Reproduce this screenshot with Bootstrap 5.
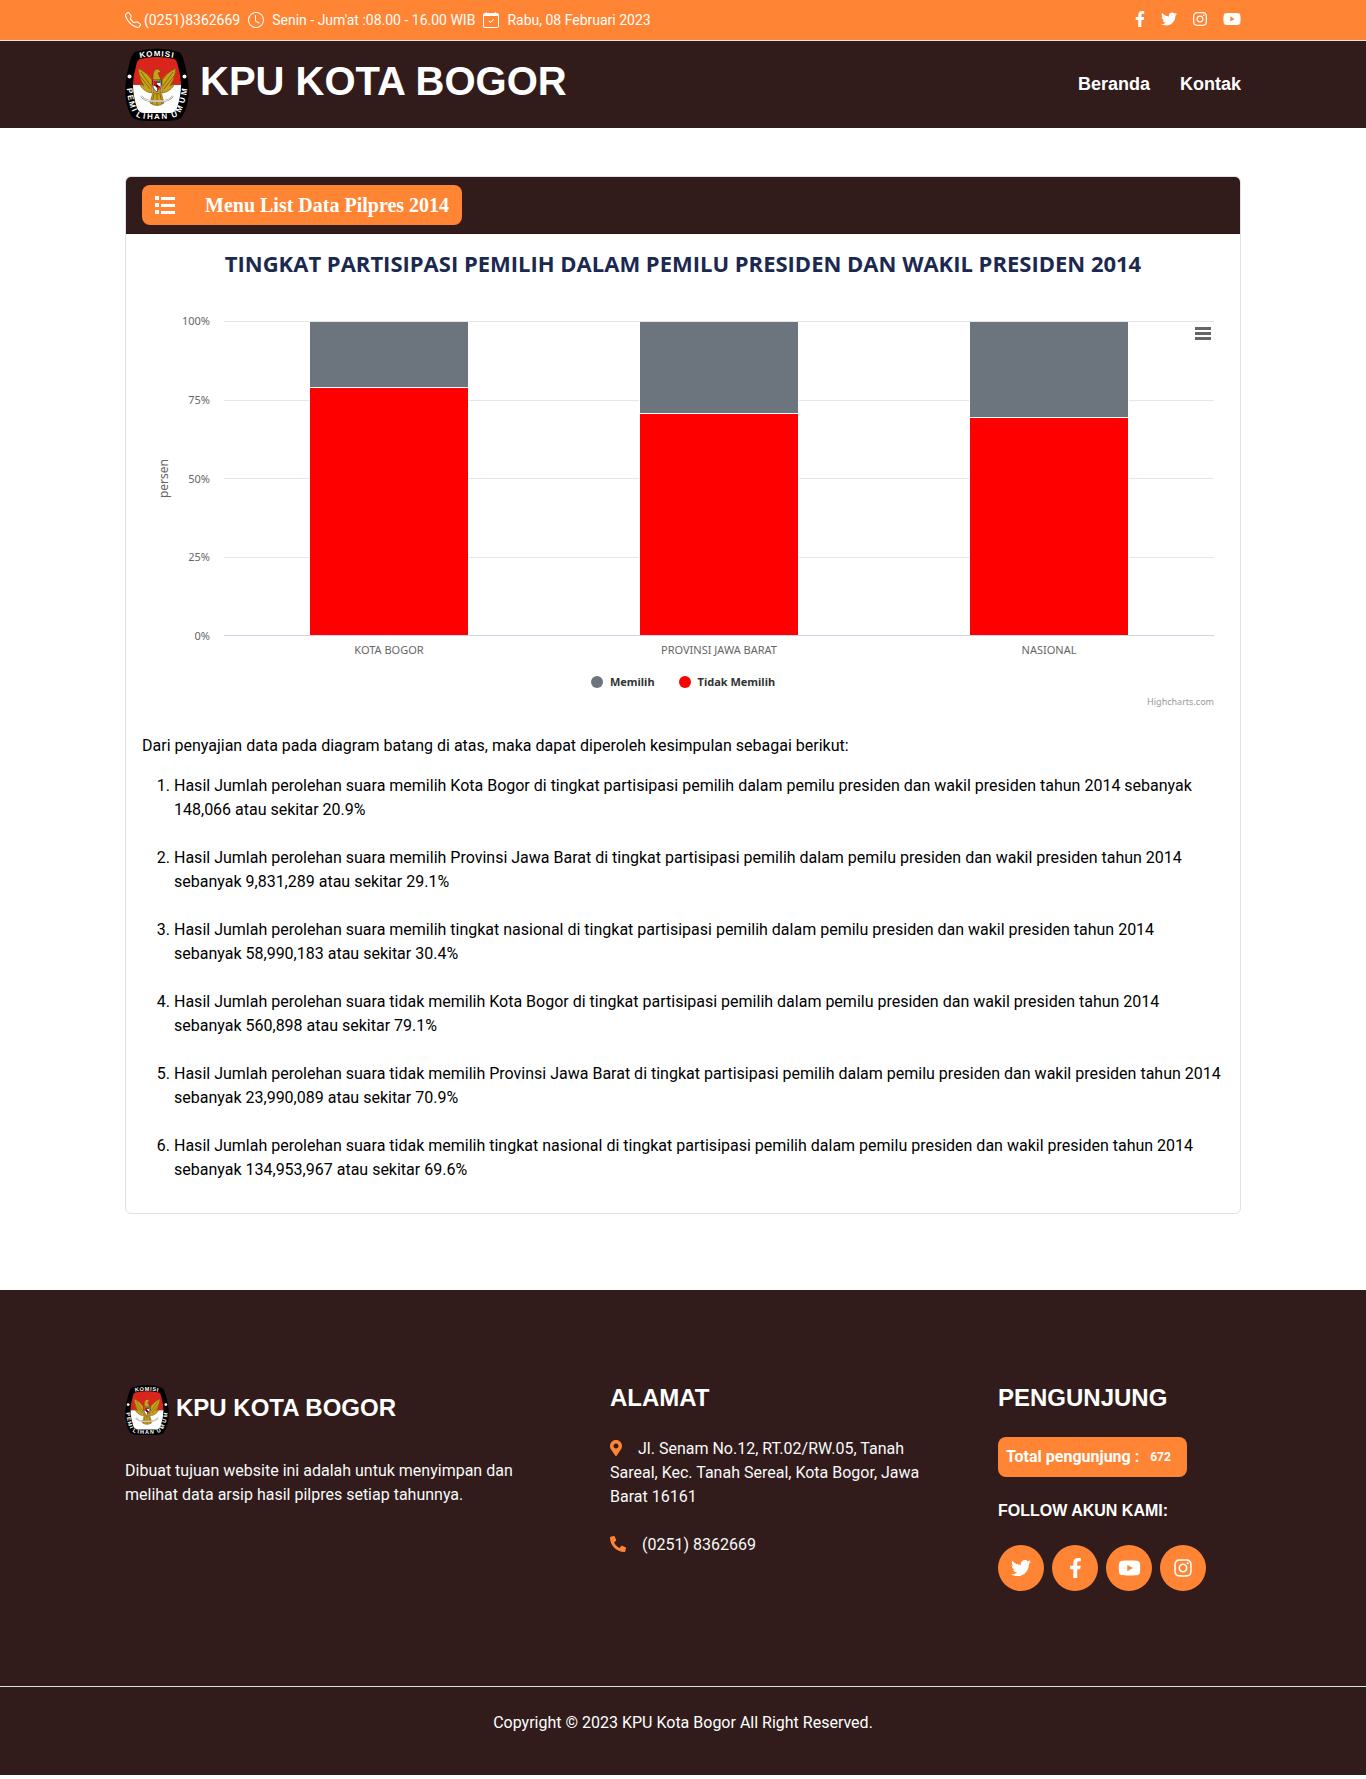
<!DOCTYPE html>
<html lang="id">
<head>
<meta charset="utf-8">
<meta name="viewport" content="width=device-width, initial-scale=1">
<title>KPU Kota Bogor</title>
<link href="https://cdn.jsdelivr.net/npm/bootstrap@5.3.0/dist/css/bootstrap.min.css" rel="stylesheet">
<style>
:root { --kpu-dark: #311c1b; --kpu-orange: #ff8534; }
body { font-family: Roboto, "Noto Sans", sans-serif; color: #000; background: #fff; }
a { text-decoration: none; }
.bg-kpu-dark { background: var(--kpu-dark); }
.bg-kpu-orange { background: var(--kpu-orange); }
.text-kpu-orange { color: var(--kpu-orange); }
.font-head { font-family: "Liberation Sans", Arial, sans-serif; font-weight: 700; }
svg { display: block; fill: currentColor; flex: none; }
.seal-text { fill: #fff; font: 700 8px "Liberation Sans", Arial, sans-serif; }
.topbar { height: 41px; font-size: 14px; border-bottom: 1px solid #dee2e6; }
.topbar .info { gap: 8px; }
.topbar .phone { gap: 3px; }
.topbar .social { padding-bottom: 2px; }
.masthead { height: 87px; }
.site-brand { gap: 11px; }
.site-name { font-size: 40px; line-height: 48px; margin: 0 0 8px; }
.main-nav { font-size: 18px; gap: 30px; }
.main-nav a { color: #fff; }
.data-card { margin-top: 48px; margin-bottom: 76px; border-color: #dee2e6; border-radius: 6px; }
.data-card .card-header { border-radius: 5px 5px 0 0; border-bottom: 1px solid #291413; padding: 8px 16px; }
.btn-menu { height: 40px; padding: 0 13px 0 12px; border: 0; border-radius: 8px; color: #fff; background: var(--kpu-orange); gap: 29px; font: 700 20px/24px "Liberation Serif", "Times New Roman", serif; }
.chart-title { font: 700 22px/26px "Open Sans", "Noto Sans", sans-serif; color: #1b2850; margin: 0; }
.chart { display: grid; grid-template-columns: 52px 20px 1fr; grid-template-rows: 315px auto; margin: 45px 10px 0; font: 11px/16px "Noto Sans", sans-serif; color: #666; }
.axis-title { grid-column: 1; grid-row: 1; font-size: 12px; writing-mode: vertical-rl; transform: rotate(180deg); justify-self: start; align-self: center; margin-left: 4px; }
.axis-ticks { grid-column: 1 / 3; grid-row: 1; margin: -8px 14px -8px 0; text-align: right; }
.gridlines, .bars { grid-column: 3; grid-row: 1; }
.gridlines div { flex: 1; border-top: 1px solid #e6e6e6; }
.gridlines { border-bottom: 1px solid #ccd6eb; }
.bars { padding: 1px 0; }
.bars > div { flex: 1; display: flex; justify-content: center; }
.stack { width: 48%; display: flex; flex-direction: column; box-shadow: 1px 0 #fff, -1px 0 #fff; }
.stack-a { background: #6c757d; border-bottom: 1px solid #fff; }
.stack-b { background: #f00; flex: 1; }
.dot-b { background: #f00; }
.cats { grid-column: 3; grid-row: 2; padding-top: 6px; }
.cats span { flex: 1; text-align: center; }
.chart-menu { grid-column: 3; grid-row: 1; justify-self: end; align-self: start; border: 0; background: none; padding: 6px 2px; color: #666; position: relative; }
.legend-row { font: 700 11px/16px "Noto Sans", sans-serif; color: #333; gap: 24px; margin-top: 16px; }
.legend-row span { display: flex; align-items: center; gap: 7px; }
.legend-row i { width: 12px; height: 12px; border-radius: 50%; }
.credit { font: 9px/12px "Noto Sans", sans-serif; color: #999; margin: 6px 10px 26px; text-align: right; }
.credit a { color: inherit; }
.findings { padding-left: 32px; margin: 0; }
.findings li { margin-bottom: 24px; }
.findings li:last-child { margin-bottom: 15px; }
.foot { padding: 95px 0; color: #f8f9fa; }
.foot h2, .foot-brand { font-size: 24px; line-height: 26px; margin: 0; color: #fff; }
.foot h2 { margin-bottom: 26px; }
.foot-brand { padding-bottom: 4px; }
.foot-logo { gap: 7px; }
.contact-icon { display: inline-block; vertical-align: -2px; }
.visitors { height: 40px; border-radius: 8px; padding: 0 16px 0 8px; font-weight: 700; font-size: 16px; color: #fff; border: 0; background: var(--kpu-orange); gap: 11px; }
.visitors small { font-size: 12px; }
.follow { font-size: 16px; line-height: 20px; margin: 24px 0; color: #fff; }
.round-link { width: 46px; height: 46px; border-radius: 50%; color: #fff; }
.copyright { border-top: 1px solid #dee2e6; padding: 24px 0 40px; color: #fff; }
</style>
</head>
<body>
<svg width="0" height="0" class="position-absolute" aria-hidden="true">
  <symbol id="fb" viewBox="0 0 320 512"><path d="M279.14 288l14.22-92.66h-88.91v-60.13c0-25.35 12.42-50.06 52.24-50.06h40.42V6.26S260.43 0 225.36 0c-73.22 0-121.08 44.38-121.08 124.72v70.62H22.89V288h81.39v224h100.17V288z"/></symbol>
  <symbol id="tw" viewBox="0 0 512 512"><path d="M459.37 151.716c.325 4.548.325 9.097.325 13.645 0 138.72-105.583 298.558-298.558 298.558-59.452 0-114.68-17.219-161.137-47.106 8.447.974 16.568 1.299 25.34 1.299 49.055 0 94.213-16.568 130.274-44.832-46.132-.975-84.792-31.188-98.112-72.772 6.498.974 12.995 1.624 19.818 1.624 9.421 0 18.843-1.3 27.614-3.573-48.081-9.747-84.143-51.98-84.143-102.985v-1.299c13.969 7.797 30.214 12.67 47.431 13.319-28.264-18.843-46.781-51.005-46.781-87.391 0-19.492 5.197-37.36 14.294-52.954 51.655 63.675 129.3 105.258 216.365 109.807-1.624-7.797-2.599-15.918-2.599-24.04 0-57.828 46.782-104.934 104.934-104.934 30.213 0 57.502 12.67 76.67 33.137 23.715-4.548 46.456-13.32 66.599-25.34-7.798 24.366-24.366 44.833-46.132 57.827 21.117-2.273 41.584-8.122 60.426-16.243-14.292 20.791-32.161 39.308-52.628 54.253z"/></symbol>
  <symbol id="ig" viewBox="0 0 448 512"><path d="M224.1 141c-63.6 0-114.9 51.3-114.9 114.9s51.3 114.9 114.9 114.9S339 319.5 339 255.9 287.7 141 224.1 141zm0 189.6c-41.1 0-74.7-33.5-74.7-74.7s33.5-74.7 74.7-74.7 74.7 33.5 74.7 74.7-33.6 74.7-74.7 74.7zm146.4-194.3c0 14.9-12 26.8-26.8 26.8-14.9 0-26.8-12-26.8-26.8s12-26.8 26.8-26.8 26.8 12 26.8 26.8zm76.1 27.2c-1.7-35.9-9.9-67.7-36.2-93.9-26.2-26.2-58-34.4-93.9-36.2-37-2.1-147.9-2.1-184.9 0-35.8 1.7-67.6 9.9-93.9 36.1s-34.4 58-36.2 93.9c-2.1 37-2.1 147.9 0 184.9 1.7 35.9 9.9 67.7 36.2 93.9s58 34.4 93.9 36.2c37 2.1 147.9 2.1 184.9 0 35.9-1.7 67.7-9.9 93.9-36.2 26.2-26.2 34.4-58 36.2-93.9 2.1-37 2.1-147.8 0-184.8zM398.8 388c-7.8 19.6-22.9 34.7-42.6 42.6-29.5 11.7-99.5 9-132.1 9s-102.7 2.6-132.1-9c-19.6-7.8-34.7-22.9-42.6-42.6-11.7-29.5-9-99.5-9-132.1s-2.6-102.7 9-132.1c7.8-19.6 22.9-34.7 42.6-42.6 29.5-11.7 99.5-9 132.1-9s102.7-2.6 132.1 9c19.6 7.8 34.7 22.9 42.6 42.6 11.7 29.5 9 99.5 9 132.1s2.7 102.7-9 132.1z"/></symbol>
  <symbol id="yt" viewBox="0 0 576 512"><path d="M549.655 124.083c-6.281-23.65-24.787-42.276-48.284-48.597C458.781 64 288 64 288 64S117.22 64 74.629 75.486c-23.497 6.322-42.003 24.947-48.284 48.597-11.412 42.867-11.412 132.305-11.412 132.305s0 89.438 11.412 132.305c6.281 23.65 24.787 41.5 48.284 47.821C117.22 448 288 448 288 448s170.78 0 213.371-11.486c23.497-6.321 42.003-24.171 48.284-47.821 11.412-42.867 11.412-132.305 11.412-132.305s0-89.438-11.412-132.305zm-317.51 213.508V175.185l142.739 81.205-142.739 81.201z"/></symbol>
  <symbol id="seal" viewBox="0 0 64 73">
    <path fill="#000" d="M10 4Q32-3 54 4Q56 5 58 10Q66 36 63 52Q61 64 56 70Q52 73 40 73H24Q12 73 8 70Q3 64 1 52Q-2 36 6 10Q8 5 10 4Z"/>
    <path fill="#da251d" d="M15 11Q32 7 49 11Q52 12 53 18Q56 28 56 37H8Q8 28 11 18Q12 12 15 11Z"/>
    <path fill="#fff" d="M8 37H56Q56 48 52 60Q50 65 45 65H19Q14 65 12 60Q8 48 8 37Z"/>
    <g transform="translate(0 -2)">
      <g fill="#c9a21a" stroke="#6b4d08" stroke-width=".6">
        <path d="M27 34Q23 27 13 22Q14 33 19 40Q15 38 14 37Q18 46 27 47Z"/>
        <path d="M37 34Q41 27 51 22Q50 33 45 40Q49 38 50 37Q46 46 37 47Z"/>
        <path d="M28 46H36L39 57Q32 62 25 57Z"/>
        <path d="M28 31Q28 23 33 23L36 26L33 27L36 34V46Q32 50 28 46Z"/>
      </g>
      <path fill="none" stroke="#6b4d08" stroke-width=".7" d="M16 26L26 40M15 30L25 43M48 26L38 40M49 30L39 43M29 48L27 58M32 48V59M35 48L37 58"/>
      <path fill="#fff" stroke="#222" stroke-width=".7" d="M28 34H36V41Q35 45 32 46Q29 45 28 41Z"/>
      <path fill="#d11" d="M28.400 34.400H32V40H28.400ZM32 40H35.600Q35 44 32 45.500Z"/><path fill="#187a3a" d="M32 34.400H35.600V37H32Z"/><circle cx="32" cy="40" r="1.500" fill="#111"/>
      <path fill="none" stroke="#999" stroke-width="2" d="M16 50Q20 56 32 55Q44 56 48 50"/><path fill="none" stroke="#eee" d="M16 50Q20 56 32 55Q44 56 48 50"/>
    </g>
    <circle cx="4.500" cy="28.500" r="2" fill="#fff"/><circle cx="59.500" cy="28.500" r="2" fill="#fff"/>
  </symbol>
</svg>

<div class="topbar bg-kpu-orange text-white">
  <div class="container h-100 d-flex align-items-center justify-content-between">
    <div class="info d-flex align-items-center">
      <span class="phone d-flex align-items-center"><svg width="16" height="16" viewBox="0 0 16 16"><path d="M3.654 1.328a.678.678 0 0 0-1.015-.063L1.605 2.300c-.483.484-.661 1.169-.450 1.770a17.568 17.568 0 0 0 4.168 6.608 17.569 17.569 0 0 0 6.608 4.168c.601.211 1.286.033 1.770-.450l1.034-1.034a.678.678 0 0 0-.063-1.015l-2.307-1.794a.678.678 0 0 0-.580-.122l-2.190.547a1.745 1.745 0 0 1-1.657-.459L5.482 8.062a1.745 1.745 0 0 1-.460-1.657l.548-2.190a.678.678 0 0 0-.122-.580L3.654 1.328zM1.884.511a1.745 1.745 0 0 1 2.612.163L6.290 2.980c.329.423.445.974.315 1.494l-.547 2.190a.678.678 0 0 0 .178.643l2.457 2.457a.678.678 0 0 0 .644.178l2.189-.547a1.745 1.745 0 0 1 1.494.315l2.306 1.794c.829.645.905 1.870.163 2.611l-1.034 1.034c-.740.740-1.846 1.065-2.877.702a18.634 18.634 0 0 1-7.010-4.420 18.634 18.634 0 0 1-4.420-7.009c-.362-1.030-.037-2.137.703-2.877L1.885.511z"/></svg>(0251)8362669</span>
      <svg width="16" height="16" viewBox="0 0 16 16"><path d="M8 3.500a.5.5 0 0 0-1 0V9a.5.5 0 0 0 .252.434l3.500 2a.5.5 0 0 0 .496-.868L8 8.710V3.500z"/><path d="M8 16A8 8 0 1 0 8 0a8 8 0 0 0 0 16zm7-8A7 7 0 1 1 1 8a7 7 0 0 1 14 0z"/></svg>
      <span>Senin - Jum'at :08.00 - 16.00 WIB</span>
      <svg width="16" height="16" viewBox="0 0 16 16"><path d="M10.854 7.146a.5.5 0 0 1 0 .708l-3 3a.5.5 0 0 1-.708 0l-1.500-1.500a.5.5 0 1 1 .708-.708L7.500 9.793l2.646-2.647a.5.5 0 0 1 .708 0z"/><path d="M3.500 0a.5.5 0 0 1 .5.5V1h8V.5a.5.5 0 0 1 1 0V1h1a2 2 0 0 1 2 2v11a2 2 0 0 1-2 2H2a2 2 0 0 1-2-2V3a2 2 0 0 1 2-2h1V.5a.5.5 0 0 1 .5-.5zM1 4v10a1 1 0 0 0 1 1h12a1 1 0 0 0 1-1V4H1z"/></svg>
      <span>Rabu, 08 Februari 2023</span>
    </div>
    <div class="social d-flex align-items-center gap-3">
      <a class="text-white" href="#" aria-label="Facebook"><svg width="10" height="16"><use href="#fb"/></svg></a>
      <a class="text-white" href="#" aria-label="Twitter"><svg width="16" height="16"><use href="#tw"/></svg></a>
      <a class="text-white" href="#" aria-label="Instagram"><svg width="14" height="16"><use href="#ig"/></svg></a>
      <a class="text-white" href="#" aria-label="YouTube"><svg width="18" height="16"><use href="#yt"/></svg></a>
    </div>
  </div>
</div>

<header class="masthead bg-kpu-dark text-white">
  <div class="container h-100 d-flex align-items-center justify-content-between">
    <a href="#" class="site-brand d-flex align-items-center text-white">
      <svg width="64" height="73" viewBox="0 0 64 73">
        <use href="#seal"/>
        <text class="seal-text" x="15 21.500 28.700 36.300 39.600 46" y="10 9 8.300 8.400 8.600 9.500" rotate="-10 -6 0 4 7 10">KOMISI</text>
        <text class="seal-text" x="1.800 2.500 3.700 6.600 10.500 17.700 21.900 29 36.400 47.400 55.300 59 61.200" y="40.600 47.500 54.100 62 68 70.500 71 71 71 70 65 55.700 47.500" rotate="82 78 74 65 30 8 2 0 -2 -20 -65 -74 -80">PEMILIHANUMUM</text>
      </svg>
      <h1 class="site-name font-head">KPU KOTA BOGOR</h1>
    </a>
    <nav class="main-nav d-flex font-head"><a href="#">Beranda</a><a href="#">Kontak</a></nav>
  </div>
</header>

<main class="container">
  <section class="card data-card">
    <div class="card-header bg-kpu-dark">
      <button class="btn-menu d-flex align-items-center" type="button">
        <svg width="22" height="20" viewBox="0 0 22 20"><path d="M1 1h4v4H1zM1 8h4v4H1zM1 15h4v4H1zM7 2h14v3H7zM7 9h14v3H7zM7 16h14v3H7z"/></svg>
        Menu List Data Pilpres 2014
      </button>
    </div>
    <div class="card-body p-3">
      <h2 class="chart-title text-center">TINGKAT PARTISIPASI PEMILIH DALAM PEMILU PRESIDEN DAN WAKIL PRESIDEN 2014</h2>
      <div class="chart" role="group" aria-label="Tingkat partisipasi pemilih">
        <div class="axis-title">persen</div>
        <div class="axis-ticks d-flex flex-column justify-content-between">
          <span>100%</span><span>75%</span><span>50%</span><span>25%</span><span>0%</span>
        </div>
        <div class="gridlines d-flex flex-column"><div></div><div></div><div></div><div></div></div>
        <div class="bars d-flex">
          <div><div class="stack"><div class="stack-a" style="height:21.200%"></div><div class="stack-b"></div></div></div>
          <div><div class="stack"><div class="stack-a" style="height:29.500%"></div><div class="stack-b"></div></div></div>
          <div><div class="stack"><div class="stack-a" style="height:30.800%"></div><div class="stack-b"></div></div></div>
        </div>
        <button class="chart-menu" type="button" aria-label="Menu grafik"><svg width="18" height="13" viewBox="0 0 18 13"><path d="M1 0h16v3H1zM1 5h16v3H1zM1 10h16v3H1z"/></svg></button>
        <div class="cats d-flex"><span>KOTA BOGOR</span><span>PROVINSI JAWA BARAT</span><span>NASIONAL</span></div>
      </div>
      <div class="legend-row d-flex justify-content-center">
        <span><i class="bg-secondary"></i>Memilih</span><span><i class="dot-b"></i>Tidak Memilih</span>
      </div>
      <div class="credit"><a href="#">Highcharts.com</a></div>
      <p>Dari penyajian data pada diagram batang di atas, maka dapat diperoleh kesimpulan sebagai berikut:</p>
      <ol class="findings">
        <li>Hasil Jumlah perolehan suara memilih Kota Bogor di tingkat partisipasi pemilih dalam pemilu presiden dan wakil presiden tahun 2014 sebanyak 148,066 atau sekitar 20.9%</li>
        <li>Hasil Jumlah perolehan suara memilih Provinsi Jawa Barat di tingkat partisipasi pemilih dalam pemilu presiden dan wakil presiden tahun 2014 sebanyak 9,831,289 atau sekitar 29.1%</li>
        <li>Hasil Jumlah perolehan suara memilih tingkat nasional di tingkat partisipasi pemilih dalam pemilu presiden dan wakil presiden tahun 2014 sebanyak 58,990,183 atau sekitar 30.4%</li>
        <li>Hasil Jumlah perolehan suara tidak memilih Kota Bogor di tingkat partisipasi pemilih dalam pemilu presiden dan wakil presiden tahun 2014 sebanyak 560,898 atau sekitar 79.1%</li>
        <li>Hasil Jumlah perolehan suara tidak memilih Provinsi Jawa Barat di tingkat partisipasi pemilih dalam pemilu presiden dan wakil presiden tahun 2014 sebanyak 23,990,089 atau sekitar 70.9%</li>
        <li>Hasil Jumlah perolehan suara tidak memilih tingkat nasional di tingkat partisipasi pemilih dalam pemilu presiden dan wakil presiden tahun 2014 sebanyak 134,953,967 atau sekitar 69.6%</li>
      </ol>
    </div>
  </section>
</main>

<footer class="bg-kpu-dark">
  <div class="foot">
    <div class="container">
      <div class="row gx-5">
        <div class="col-lg-5">
          <a href="#" class="foot-logo d-flex align-items-center mb-4">
            <svg width="44" height="50" viewBox="0 0 64 73">
              <use href="#seal"/>
              <text class="seal-text" x="15 21.500 28.700 36.300 39.600 46" y="10 9 8.300 8.400 8.600 9.500" rotate="-10 -6 0 4 7 10">KOMISI</text>
              <text class="seal-text" x="1.800 2.500 3.700 6.600 10.500 17.700 21.900 29 36.400 47.400 55.300 59 61.200" y="40.600 47.500 54.100 62 68 70.500 71 71 71 70 65 55.700 47.500" rotate="82 78 74 65 30 8 2 0 -2 -20 -65 -74 -80">PEMILIHANUMUM</text>
            </svg>
            <span class="foot-brand font-head">KPU KOTA BOGOR</span>
          </a>
          <p>Dibuat tujuan website ini adalah untuk menyimpan dan melihat data arsip hasil pilpres setiap tahunnya.</p>
        </div>
        <div class="col-lg-4">
          <h2 class="font-head">ALAMAT</h2>
          <p class="mb-4"><svg class="contact-icon text-kpu-orange me-3" width="12" height="16" viewBox="0 0 384 512"><path d="M172.268 501.670C26.970 291.031 0 269.413 0 192 0 85.961 85.961 0 192 0s192 85.961 192 192c0 77.413-26.970 99.031-172.268 309.670-9.535 13.774-29.930 13.773-39.464 0zM192 272c44.183 0 80-35.817 80-80s-35.817-80-80-80-80 35.817-80 80 35.817 80 80 80z"/></svg>Jl. Senam No.12, RT.02/RW.05, Tanah Sareal, Kec. Tanah Sereal, Kota Bogor, Jawa Barat 16161</p>
          <p class="mb-0"><svg class="contact-icon text-kpu-orange me-3" width="16" height="16" viewBox="0 0 512 512"><path d="M493.400 24.600l-104-24c-11.300-2.600-22.900 3.300-27.500 13.900l-48 112c-4.200 9.800-1.400 21.300 6.900 28l60.600 49.600c-36 76.700-98.900 140.500-177.200 177.200l-49.600-60.600c-6.800-8.300-18.200-11.100-28-6.900l-112 48C3.900 366.500-2 378.100.6 389.400l24 104C27.100 504.200 36.700 512 48 512c256.100 0 464-207.500 464-464 0-11.200-7.700-20.900-18.600-23.400z" transform="matrix(-1 0 0 1 512 0)"/></svg>(0251) 8362669</p>
        </div>
        <div class="col-lg-3">
          <h2 class="font-head">PENGUNJUNG</h2>
          <button type="button" class="visitors d-flex align-items-center">Total pengunjung : <small>672</small></button>
          <h3 class="follow font-head">FOLLOW AKUN KAMI:</h3>
          <div class="d-flex gap-2">
            <a class="round-link bg-kpu-orange d-flex align-items-center justify-content-center" href="#" aria-label="Twitter"><svg width="20" height="20"><use href="#tw"/></svg></a>
            <a class="round-link bg-kpu-orange d-flex align-items-center justify-content-center" href="#" aria-label="Facebook"><svg width="13" height="20"><use href="#fb"/></svg></a>
            <a class="round-link bg-kpu-orange d-flex align-items-center justify-content-center" href="#" aria-label="YouTube"><svg width="23" height="20"><use href="#yt"/></svg></a>
            <a class="round-link bg-kpu-orange d-flex align-items-center justify-content-center" href="#" aria-label="Instagram"><svg width="18" height="20"><use href="#ig"/></svg></a>
          </div>
        </div>
      </div>
    </div>
  </div>
  <div class="copyright text-center">Copyright © 2023 KPU Kota Bogor All Right Reserved.</div>
</footer>
<script src="https://cdn.jsdelivr.net/npm/bootstrap@5.3.0/dist/js/bootstrap.bundle.min.js"></script>
</body>
</html>
